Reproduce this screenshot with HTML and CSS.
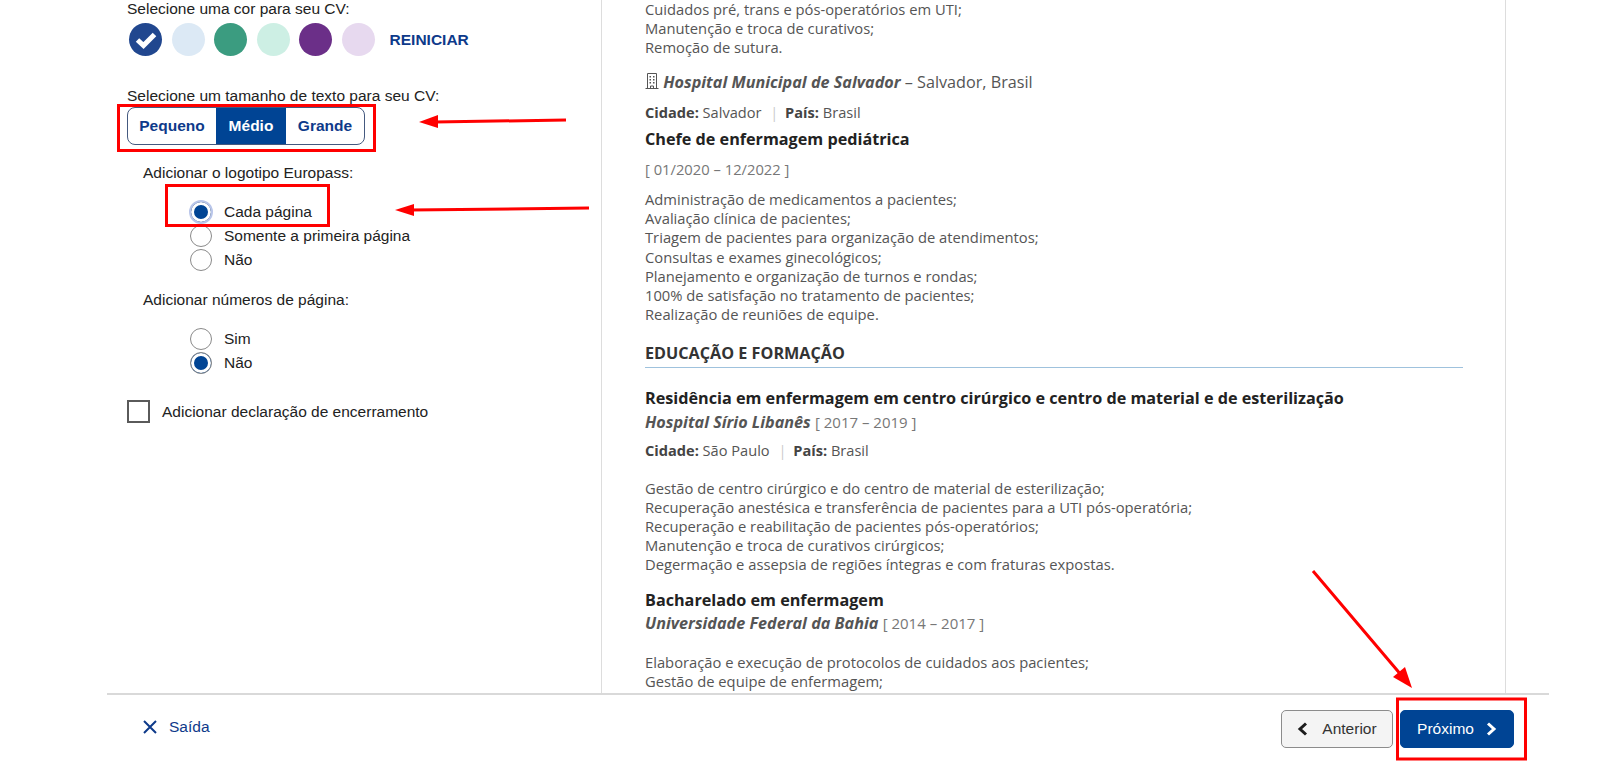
FILE: index.html
```html
<!DOCTYPE html>
<html lang="pt">
<head>
    <meta charset="UTF-8">
    <meta name="viewport" content="width=device-width, initial-scale=1.0">
    <title>Europass CV</title>
    <link rel="stylesheet" href="styles.css">
</head>
<body>
<div class="page">
    <div class="editor">
        <div class="options">
            <div class="option-label">Selecione uma cor para seu CV:</div>
            <div class="colors">
                <span class="dot dot-navy">
                    <svg width="22" height="18" viewBox="0 0 22 18"><path d="M2.500 9l6 5.500L19.500 3.500" fill="none" stroke="#fff" stroke-width="5"/></svg>
                </span>
                <span class="dot dot-sky"></span>
                <span class="dot dot-green"></span>
                <span class="dot dot-mint"></span>
                <span class="dot dot-purple"></span>
                <span class="dot dot-lilac"></span>
                <a class="reset">REINICIAR</a>
            </div>

            <div class="option-label size-label">Selecione um tamanho de texto para seu CV:</div>
            <div class="sizes">
                <div class="size size-small">Pequeno</div>
                <div class="size size-medium">Médio</div>
                <div class="size size-large">Grande</div>
            </div>

            <div class="group">
                <div class="group-title">Adicionar o logotipo Europass:</div>
                <div class="radios">
                    <label class="radio"><span class="circle checked focused"></span>Cada página</label>
                    <label class="radio"><span class="circle"></span>Somente a primeira página</label>
                    <label class="radio"><span class="circle"></span>Não</label>
                </div>
            </div>

            <div class="group group-numbers">
                <div class="group-title">Adicionar números de página:</div>
                <div class="radios">
                    <label class="radio"><span class="circle"></span>Sim</label>
                    <label class="radio"><span class="circle checked"></span>Não</label>
                </div>
            </div>

            <label class="closing"><span class="box"></span>Adicionar declaração de encerramento</label>
        </div>

        <div class="preview">
            <div class="lines first-lines">
                Cuidados pré, trans e pós-operatórios em UTI;<br>
                Manutenção e troca de curativos;<br>
                Remoção de sutura.
            </div>

            <div class="employer">
                <svg class="building" width="14" height="16" viewBox="0 0 14 16">
                    <path d="M2.500 15.500V.5h9v15M.5 15.500h13M5.500 15.500v-2.500h3v2.500" fill="none" stroke="#555" stroke-width="1"/>
                    <path d="M4.500 3h1.500v1.500H4.500zM8 3h1.500v1.500H8zM4.500 6h1.500v1.500H4.500zM8 6h1.500v1.500H8zM4.500 9h1.500v1.500H4.500zM8 9h1.500v1.500H8z" fill="#555"/>
                </svg>
                <b><i>Hospital Municipal de Salvador</i></b> – Salvador, Brasil
            </div>
            <div class="meta"><b>Cidade:</b> Salvador <span class="sep">|</span> <b>País:</b> Brasil</div>
            <div class="job-title">Chefe de enfermagem pediátrica</div>
            <div class="dates">[ 01/2020 – 12/2022 ]</div>
            <div class="lines">
                Administração de medicamentos a pacientes;<br>
                Avaliação clínica de pacientes;<br>
                Triagem de pacientes para organização de atendimentos;<br>
                Consultas e exames ginecológicos;<br>
                Planejamento e organização de turnos e rondas;<br>
                100% de satisfação no tratamento de pacientes;<br>
                Realização de reuniões de equipe.
            </div>

            <h2 class="section-title">EDUCAÇÃO E FORMAÇÃO</h2>

            <div class="job-title course">Residência em enfermagem em centro cirúrgico e centro de material e de esterilização</div>
            <div class="school"><b><i>Hospital Sírio Libanês</i></b> <span class="years">[ 2017 – 2019 ]</span></div>
            <div class="meta"><b>Cidade:</b> São Paulo <span class="sep">|</span> <b>País:</b> Brasil</div>
            <div class="lines course-lines">
                Gestão de centro cirúrgico e do centro de material de esterilização;<br>
                Recuperação anestésica e transferência de pacientes para a UTI pós-operatória;<br>
                Recuperação e reabilitação de pacientes pós-operatórios;<br>
                Manutenção e troca de curativos cirúrgicos;<br>
                Degermação e assepsia de regiões íntegras e com fraturas expostas.
            </div>

            <div class="job-title course second">Bacharelado em enfermagem</div>
            <div class="school"><b><i>Universidade Federal da Bahia</i></b> <span class="years">[ 2014 – 2017 ]</span></div>
            <div class="lines course-lines last">
                Elaboração e execução de protocolos de cuidados aos pacientes;<br>
                Gestão de equipe de enfermagem;
            </div>
        </div>
    </div>

    <div class="footer">
        <a class="exit">
            <svg width="14" height="14" viewBox="0 0 14 14"><path d="M1 1l12 12M13 1L1 13" stroke="#0e3a8a" stroke-width="2" fill="none"/></svg>
            Saída
        </a>
        <div class="nav">
            <button class="btn btn-back">
                <svg width="11" height="14" viewBox="0 0 11 14"><path d="M9 1.500L3 7l6 5.500" fill="none" stroke="#1d1d1d" stroke-width="3"/></svg>
                Anterior
            </button>
            <button class="btn btn-next">
                Próximo
                <svg width="11" height="14" viewBox="0 0 11 14"><path d="M2 1.500L8 7l-6 5.500" fill="none" stroke="#fff" stroke-width="3"/></svg>
            </button>
        </div>
    </div>
</div>

<!-- red marks drawn over the screenshot -->
<svg class="marks" width="1600" height="771" viewBox="0 0 1600 771">
    <g fill="none" stroke="#f00" stroke-width="3">
        <rect x="118.500" y="105.500" width="256" height="45"/>
        <rect x="166.500" y="185.500" width="162" height="40"/>
        <rect x="1397.500" y="699" width="128" height="60"/>
        <path d="M566 120L435 122M589 208L410 210M1313 571L1402 676"/>
    </g>
    <g fill="#f00">
        <path d="M419 122L438 115L438 128Z"/>
        <path d="M395 210L414 204L414 216Z"/>
        <path d="M1412 688L1393 677L1405 667Z"/>
    </g>
</svg>
</body>
</html>
```

FILE: styles.css
```css
html, body {
    margin: 0;
    padding: 0;
    height: 771px;
    overflow: hidden;
    background-color: #fff;
}

body {
    font-family: "Liberation Sans", Arial, sans-serif;
    font-size: 15.500px;
    color: #222;
    position: relative;
}

.page {
    margin: 0 51px 0 107px;
}

.editor {
    display: flex;
    height: 693px;
    overflow: hidden;
}

.options {
    width: 494px;
    flex: none;
    padding: 0 0 0 20px;
    box-sizing: border-box;
}

.option-label {
    line-height: 18px;
}

.colors {
    display: flex;
    align-items: center;
    gap: 9.600px;
    margin: 5px 0 0 2px;
}

.dot {
    width: 33px;
    height: 33px;
    border-radius: 50%;
    display: flex;
    align-items: center;
    justify-content: center;
}

.dot-navy { background-color: #21478f; }
.dot-sky { background-color: #dce9f5; }
.dot-green { background-color: #3b9c80; }
.dot-mint { background-color: #cdefe4; }
.dot-purple { background-color: #6b2f88; }
.dot-lilac { background-color: #e7d9ef; }

.reset {
    margin-left: 5px;
    font-weight: bold;
    color: #0e3a8a;
}

.size-label {
    margin-top: 31px;
}

.sizes {
    display: flex;
    width: 238px;
    height: 38px;
    margin-top: 2px;
    border: 1px solid #44597f;
    border-radius: 8px;
    box-sizing: border-box;
    overflow: hidden;
    font-weight: bold;
    color: #0e3a8a;
}

.size {
    display: flex;
    align-items: center;
    justify-content: center;
}

.size-small { width: 88px; }
.size-medium { width: 70px; background-color: #004494; color: #fff; }
.size-large { flex: 1; }

.group {
    padding-left: 16px;
    margin-top: 19px;
}

.group-numbers {
    margin-top: 20px;
}

.group-title {
    line-height: 18px;
}

.radios {
    display: flex;
    flex-direction: column;
    gap: 2px;
    margin: 19px 0 0 47px;
}

.radio {
    display: flex;
    align-items: center;
    gap: 12px;
    height: 22px;
}

.circle {
    width: 22px;
    height: 22px;
    border: 1px solid #8a8a8a;
    border-radius: 50%;
    box-sizing: border-box;
    background-color: #fff;
    flex: none;
}

.circle.checked {
    background-color: #004494;
    box-shadow: inset 0 0 0 3px #fff;
}

.circle.focused {
    outline: 2px solid #b9c6ea;
    outline-offset: -1px;
}

.closing {
    display: flex;
    align-items: center;
    gap: 12px;
    margin-top: 26px;
}

.box {
    width: 23px;
    height: 23px;
    border: 2px solid #5a5a5a;
    box-sizing: border-box;
}

.preview {
    flex: 1;
    border-left: 1px solid #ddd;
    border-right: 1px solid #ddd;
    margin-right: 43px;
    padding: 0 42px 0 43px;
    font-family: "Open Sans", sans-serif;
    font-size: 14.750px;
    line-height: 19.200px;
    color: #555;
}

.meta b {
    color: #444;
}

.employer {
    font-size: 16.200px;
    line-height: 22px;
    margin-top: 13px;
}

.building {
    vertical-align: -1px;
}

.employer b, .school b {
    color: #555;
}

.meta {
    margin-top: 10px;
    font-size: 14.600px;
}

.school + .meta {
    margin-top: 8px;
}

.sep {
    color: #ccc;
    margin: 0 3px 0 5px;
}

.job-title {
    font-size: 16.200px;
    font-weight: bold;
    line-height: 22px;
    color: #222;
    margin-top: 6px;
}

.dates {
    color: #777;
    margin-top: 10px;
}

.dates + .lines {
    margin-top: 11px;
}

.section-title {
    font-size: 16.200px;
    font-weight: bold;
    line-height: 22px;
    color: #333;
    margin: 18px 0 0;
    padding-bottom: 3px;
    border-bottom: 1px solid #9fc2dd;
}

.course {
    margin-top: 19px;
}

.course.second {
    margin-top: 14px;
}

.school {
    margin-top: 2px;
    line-height: 22px;
    font-size: 16.200px;
}

.second + .school {
    margin-top: 1px;
}

.years {
    color: #777;
    font-size: 15px;
}

.course-lines {
    margin-top: 18px;
}

.course-lines.last {
    margin-top: 19px;
}

.footer {
    display: flex;
    justify-content: space-between;
    align-items: center;
    height: 78px;
    border-top: 2px solid #d9d9d9;
    box-sizing: border-box;
    padding: 0 35px 8px 36px;
}

.exit {
    display: flex;
    align-items: center;
    gap: 12px;
    padding-bottom: 4px;
    color: #0e3a8a;
}

.nav {
    display: flex;
    gap: 7px;
}

.btn {
    display: flex;
    align-items: center;
    justify-content: center;
    height: 38px;
    border-radius: 5px;
    font-family: "Liberation Sans", Arial, sans-serif;
    font-size: 15.500px;
}

.btn-back {
    width: 112px;
    gap: 14px;
    border: 1px solid #8c8c8c;
    background-color: #f4f4f4;
    color: #333;
}

.btn-next {
    width: 114px;
    gap: 12px;
    border: 1px solid #004494;
    background-color: #004494;
    color: #fff;
}

.marks {
    position: absolute;
    left: 0;
    top: 0;
    pointer-events: none;
}
```
